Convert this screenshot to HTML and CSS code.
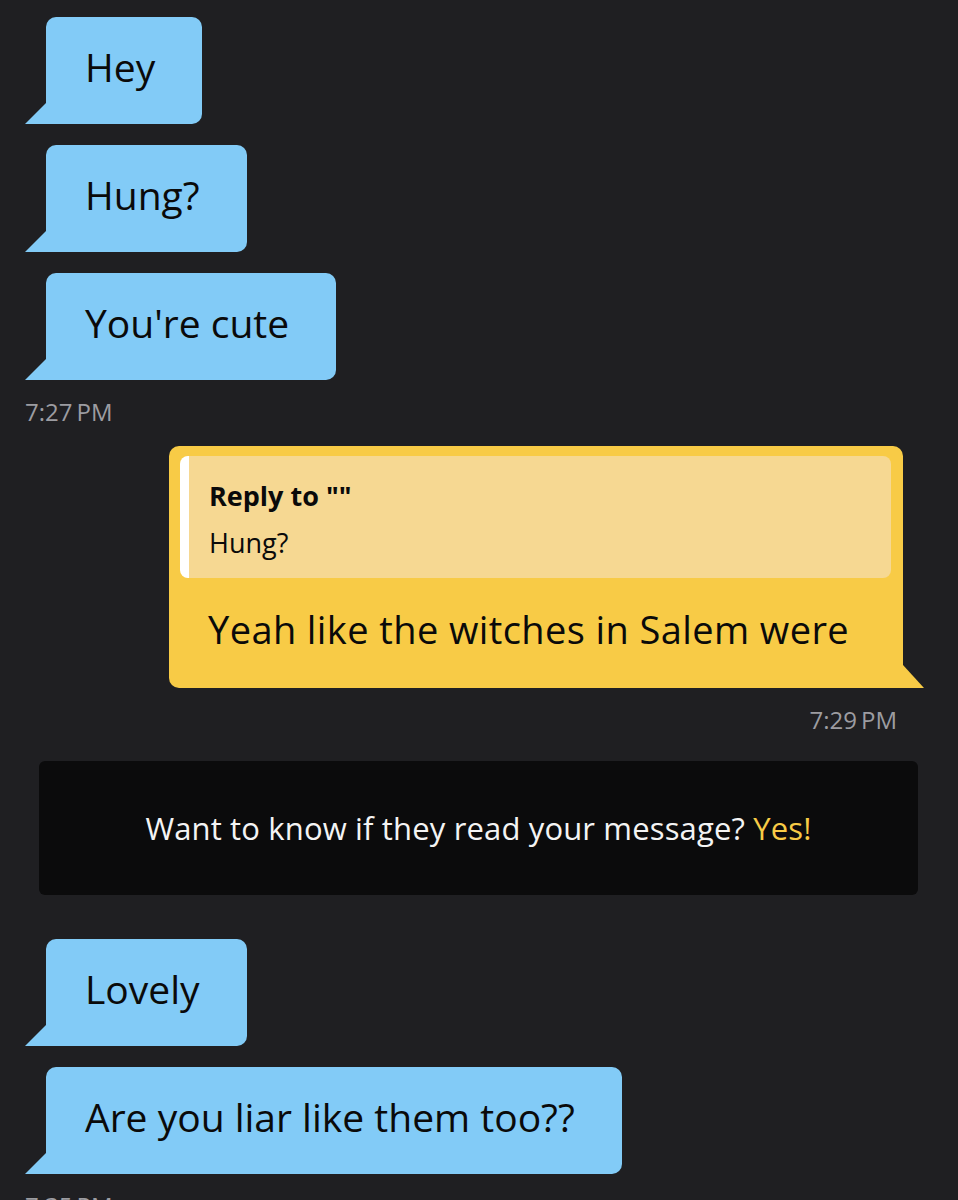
FILE: index.html
```html
<!DOCTYPE html>
<html lang="en">
<head>
    <meta charset="UTF-8">
    <meta name="viewport" content="width=device-width, initial-scale=1.0">
    <title>Chat</title>
    <link rel="stylesheet" href="styles.css">
</head>
<body>
    <div class="chat">
        <div class="msg in">Hey</div>
        <div class="msg in">Hung?</div>
        <div class="msg in">You're cute</div>
        <div class="time">7:27&#8201;PM</div>

        <div class="msg out">
            <div class="quote">
                <div class="quote-title">Reply to ""</div>
                <div class="quote-text">Hung?</div>
            </div>
            <div class="out-text">Yeah like the witches in Salem were</div>
        </div>
        <div class="time right">7:29&#8201;PM</div>

        <!-- read receipts upsell -->
        <div class="banner">Want to know if they read your message?&nbsp;<span class="yes">Yes!</span></div>

        <div class="msg in first">Lovely</div>
        <div class="msg in">Are you liar like them too??</div>
        <div class="time">7:35&#8201;PM</div>
    </div>
</body>
</html>
```

FILE: styles.css
```css
body {
    margin: 0;
    background-color: #1f1f22;
    font-family: 'Open Sans', 'Noto Sans', sans-serif;
    color: #0a0a0a;
}
.chat {
    display: flex;
    flex-direction: column;
    align-items: flex-start;
    padding-top: 17px;
}
.chat > * {
    flex-shrink: 0;
}
.msg {
    position: relative;
}
.msg.in {
    margin-left: 46px;
    margin-bottom: 21px;
    padding: 26px 47px 34px 39px;
    font-size: 39px;
    line-height: 47px;
    background-color: #82cbf7;
    border-radius: 10px 10px 10px 0;
}
.msg.in::before {
    content: "";
    position: absolute;
    left: -21px;
    bottom: 0;
    width: 21px;
    height: 21px;
    background-color: #82cbf7;
    clip-path: polygon(100% 0, 100% 100%, 0 100%);
}
.msg.in.first {
    margin-top: 44px;
}
.time {
    margin-left: 25px;
    font-size: 24px;
    line-height: 24px;
    color: #9c9ca1;
}
.time.right {
    align-self: flex-end;
    margin: 20px 61px 0 0;
}
.msg.in + .time {
    margin-top: -1px;
}
.msg.out {
    align-self: flex-end;
    width: 734px;
    box-sizing: border-box;
    margin: 22px 55px 0 0;
    padding: 10px 12px 0 11px;
    background-color: #f8cb46;
    border-radius: 10px 10px 0 10px;
}
.msg.out::after {
    content: "";
    position: absolute;
    right: -21px;
    bottom: 0;
    width: 21px;
    height: 23px;
    background-color: #f8cb46;
    clip-path: polygon(0 0, 100% 100%, 0 100%);
}
.quote {
    height: 122px;
    box-sizing: border-box;
    padding: 16px 20px 12px 20px;
    background-color: #f6d892;
    border-left: 9px solid #fff;
    border-radius: 8px;
    font-size: 27px;
    line-height: 47px;
}
.quote-title {
    font-weight: bold;
}
.out-text {
    padding: 0 0 8px 28px;
    font-size: 38px;
    letter-spacing: 0.4px;
    line-height: 102px;
}
.banner {
    align-self: stretch;
    display: flex;
    align-items: center;
    justify-content: center;
    height: 134px;
    margin: 29px 40px 0 39px;
    background-color: #0b0b0c;
    border-radius: 6px;
    color: #f4f4f4;
    font-size: 31px;
    letter-spacing: 0.15px;
}
.yes {
    color: #f8cb46;
}
```
